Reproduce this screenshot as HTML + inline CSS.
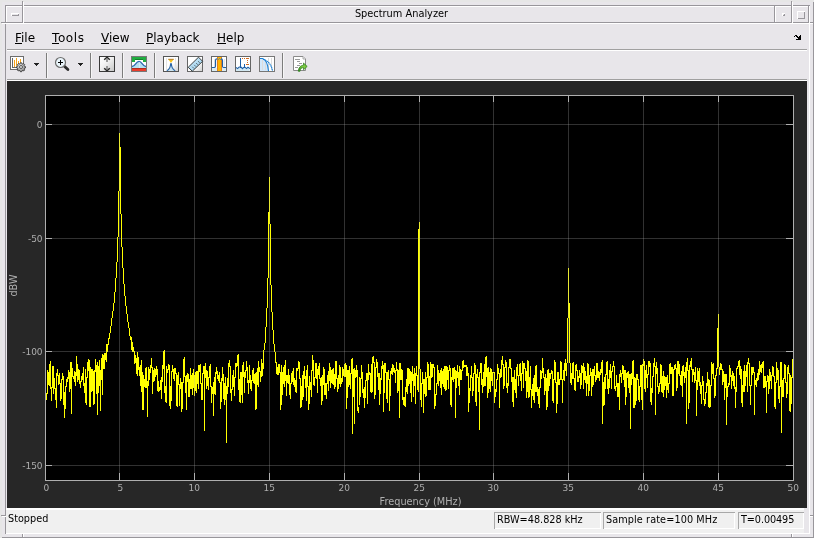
<!DOCTYPE html><html><head><meta charset="utf-8"><title>Spectrum Analyzer</title><style>
html,body{margin:0;padding:0}
body{width:814px;height:538px;overflow:hidden;background:#e8e6ea;position:relative;font-family:"DejaVu Sans","Liberation Sans",sans-serif;}
.r{position:absolute}
.t{position:absolute;will-change:transform;white-space:nowrap;line-height:1;color:#000}
svg{position:absolute;left:0;top:0}

</style></head><body>
<div class="r" style="left:0px;top:0px;width:814px;height:2px;background:#e6e6e6"></div>
<div class="r" style="left:0px;top:0px;width:2px;height:538px;background:#e6e6e6"></div>
<div class="r" style="left:813px;top:2px;width:1px;height:536px;background:#98969b"></div>
<div class="r" style="left:2px;top:537px;width:812px;height:1px;background:#98969b"></div>
<div class="r" style="left:5px;top:5px;width:805px;height:1px;background:#98969b"></div>
<div class="r" style="left:5px;top:5px;width:1px;height:529px;background:#98969b"></div>
<div class="r" style="left:809px;top:6px;width:1px;height:528px;background:#ffffff"></div>
<div class="r" style="left:6px;top:533px;width:804px;height:1px;background:#ffffff"></div>
<div class="r" style="left:6px;top:6px;width:16px;height:1px;background:#ffffff"></div>
<div class="r" style="left:6px;top:6px;width:1px;height:16px;background:#ffffff"></div>
<div class="r" style="left:22px;top:6px;width:1px;height:17px;background:#98969b"></div>
<div class="r" style="left:6px;top:22px;width:17px;height:1px;background:#98969b"></div>
<div class="r" style="left:23px;top:6px;width:751px;height:1px;background:#ffffff"></div>
<div class="r" style="left:23px;top:6px;width:1px;height:16px;background:#ffffff"></div>
<div class="r" style="left:774px;top:6px;width:1px;height:17px;background:#98969b"></div>
<div class="r" style="left:23px;top:22px;width:752px;height:1px;background:#98969b"></div>
<div class="r" style="left:775px;top:6px;width:16px;height:1px;background:#ffffff"></div>
<div class="r" style="left:775px;top:6px;width:1px;height:16px;background:#ffffff"></div>
<div class="r" style="left:791px;top:6px;width:1px;height:17px;background:#98969b"></div>
<div class="r" style="left:775px;top:22px;width:17px;height:1px;background:#98969b"></div>
<div class="r" style="left:792px;top:6px;width:16px;height:1px;background:#ffffff"></div>
<div class="r" style="left:792px;top:6px;width:1px;height:16px;background:#ffffff"></div>
<div class="r" style="left:808px;top:6px;width:1px;height:17px;background:#98969b"></div>
<div class="r" style="left:792px;top:22px;width:17px;height:1px;background:#98969b"></div>
<div class="r" style="left:6px;top:23px;width:803px;height:1px;background:#ffffff"></div>
<div class="r" style="left:22px;top:1px;width:1px;height:5px;background:#98969b"></div>
<div class="r" style="left:23px;top:2px;width:1px;height:4px;background:#ffffff"></div>
<div class="r" style="left:22px;top:534px;width:1px;height:3px;background:#98969b"></div>
<div class="r" style="left:23px;top:534px;width:1px;height:3px;background:#ffffff"></div>
<div class="r" style="left:791px;top:1px;width:1px;height:5px;background:#98969b"></div>
<div class="r" style="left:792px;top:2px;width:1px;height:4px;background:#ffffff"></div>
<div class="r" style="left:791px;top:534px;width:1px;height:3px;background:#98969b"></div>
<div class="r" style="left:792px;top:534px;width:1px;height:3px;background:#ffffff"></div>
<div class="r" style="left:1px;top:22px;width:5px;height:1px;background:#98969b"></div>
<div class="r" style="left:2px;top:23px;width:4px;height:1px;background:#ffffff"></div>
<div class="r" style="left:810px;top:22px;width:3px;height:1px;background:#98969b"></div>
<div class="r" style="left:810px;top:23px;width:3px;height:1px;background:#ffffff"></div>
<div class="r" style="left:1px;top:515px;width:5px;height:1px;background:#98969b"></div>
<div class="r" style="left:2px;top:516px;width:4px;height:1px;background:#ffffff"></div>
<div class="r" style="left:810px;top:515px;width:3px;height:1px;background:#98969b"></div>
<div class="r" style="left:810px;top:516px;width:3px;height:1px;background:#ffffff"></div>
<div class="r" style="left:23px;top:6px;width:1px;height:17px;background:#ffffff"></div>
<div class="r" style="left:792px;top:6px;width:1px;height:17px;background:#ffffff"></div>
<div class="r" style="left:11px;top:13px;width:8px;height:1px;background:#ffffff"></div>
<div class="r" style="left:11px;top:13px;width:1px;height:3px;background:#ffffff"></div>
<div class="r" style="left:12px;top:15px;width:7px;height:1px;background:#98969b"></div>
<div class="r" style="left:18px;top:14px;width:1px;height:2px;background:#98969b"></div>
<div class="r" style="left:782px;top:13px;width:3px;height:1px;background:#ffffff"></div>
<div class="r" style="left:782px;top:13px;width:1px;height:3px;background:#ffffff"></div>
<div class="r" style="left:783px;top:15px;width:2px;height:1px;background:#98969b"></div>
<div class="r" style="left:784px;top:14px;width:1px;height:2px;background:#98969b"></div>
<div class="r" style="left:797px;top:11px;width:8px;height:1px;background:#ffffff"></div>
<div class="r" style="left:797px;top:11px;width:1px;height:8px;background:#ffffff"></div>
<div class="r" style="left:798px;top:18px;width:7px;height:1px;background:#98969b"></div>
<div class="r" style="left:804px;top:12px;width:1px;height:7px;background:#98969b"></div>
<div class="t" style="left:25.5px;width:751px;top:9px;text-align:center;font-size:9.8px;">Spectrum Analyzer</div>
<div class="r" style="left:7px;top:49px;width:800px;height:1px;background:#a0a0a0"></div>
<div class="r" style="left:7px;top:50px;width:800px;height:1px;background:#ffffff"></div>
<div class="t" style="left:15px;top:32px;font-size:12px;">File</div>
<div class="r" style="left:15px;top:43px;width:7px;height:1px;background:#000"></div>
<div class="t" style="left:52px;top:32px;font-size:12px;letter-spacing:0.6px;">Tools</div>
<div class="r" style="left:52px;top:43px;width:7px;height:1px;background:#000"></div>
<div class="t" style="left:101px;top:32px;font-size:12px;">View</div>
<div class="r" style="left:101px;top:43px;width:8px;height:1px;background:#000"></div>
<div class="t" style="left:146px;top:32px;font-size:12px;">Playback</div>
<div class="r" style="left:146px;top:43px;width:8px;height:1px;background:#000"></div>
<div class="t" style="left:217px;top:32px;font-size:12px;">Help</div>
<div class="r" style="left:217px;top:43px;width:9px;height:1px;background:#000"></div>
<div class="r" style="left:795px;top:35px;width:1px;height:1px;background:#000"></div>
<div class="r" style="left:796px;top:35px;width:1px;height:1px;background:#000"></div>
<div class="r" style="left:800px;top:35px;width:1px;height:1px;background:#000"></div>
<div class="r" style="left:794px;top:36px;width:1px;height:1px;background:#000"></div>
<div class="r" style="left:796px;top:36px;width:1px;height:1px;background:#000"></div>
<div class="r" style="left:797px;top:36px;width:1px;height:1px;background:#000"></div>
<div class="r" style="left:799px;top:36px;width:1px;height:1px;background:#000"></div>
<div class="r" style="left:800px;top:36px;width:1px;height:1px;background:#000"></div>
<div class="r" style="left:797px;top:37px;width:1px;height:1px;background:#000"></div>
<div class="r" style="left:798px;top:37px;width:1px;height:1px;background:#000"></div>
<div class="r" style="left:799px;top:37px;width:1px;height:1px;background:#000"></div>
<div class="r" style="left:800px;top:37px;width:1px;height:1px;background:#000"></div>
<div class="r" style="left:798px;top:38px;width:1px;height:1px;background:#000"></div>
<div class="r" style="left:799px;top:38px;width:1px;height:1px;background:#000"></div>
<div class="r" style="left:800px;top:38px;width:1px;height:1px;background:#000"></div>
<div class="r" style="left:796px;top:39px;width:1px;height:1px;background:#000"></div>
<div class="r" style="left:797px;top:39px;width:1px;height:1px;background:#000"></div>
<div class="r" style="left:798px;top:39px;width:1px;height:1px;background:#000"></div>
<div class="r" style="left:799px;top:39px;width:1px;height:1px;background:#000"></div>
<div class="r" style="left:800px;top:39px;width:1px;height:1px;background:#000"></div>
<div class="r" style="left:7px;top:79px;width:800px;height:1px;background:#a0a0a0"></div>
<div class="r" style="left:7px;top:80px;width:800px;height:1px;background:#ffffff"></div>
<div class="r" style="left:46px;top:53px;width:1px;height:25px;background:#7c7c7c"></div>
<div class="r" style="left:47px;top:53px;width:1px;height:25px;background:#f6f6f6"></div>
<div class="r" style="left:90px;top:53px;width:1px;height:25px;background:#7c7c7c"></div>
<div class="r" style="left:91px;top:53px;width:1px;height:25px;background:#f6f6f6"></div>
<div class="r" style="left:122px;top:53px;width:1px;height:25px;background:#7c7c7c"></div>
<div class="r" style="left:123px;top:53px;width:1px;height:25px;background:#f6f6f6"></div>
<div class="r" style="left:154px;top:53px;width:1px;height:25px;background:#7c7c7c"></div>
<div class="r" style="left:155px;top:53px;width:1px;height:25px;background:#f6f6f6"></div>
<div class="r" style="left:282px;top:53px;width:1px;height:25px;background:#7c7c7c"></div>
<div class="r" style="left:283px;top:53px;width:1px;height:25px;background:#f6f6f6"></div>
<div class="r" style="left:7px;top:81px;width:800px;height:427px;background:#272727"></div>
<div class="r" style="left:46px;top:96px;width:747px;height:384px;background:#000"></div>
<div class="r" style="left:6px;top:508px;width:798px;height:25px;background:#f0f0f0"></div>
<div class="r" style="left:6px;top:508px;width:798px;height:2px;background:#ffffff"></div>
<div class="t" style="left:8px;top:514px;font-size:9.7px;">Stopped</div>
<div class="r" style="left:494px;top:512px;width:107px;height:1px;background:#a8a8a8"></div>
<div class="r" style="left:494px;top:512px;width:1px;height:17px;background:#a8a8a8"></div>
<div class="r" style="left:495px;top:528px;width:106px;height:1px;background:#ffffff"></div>
<div class="r" style="left:600px;top:513px;width:1px;height:16px;background:#ffffff"></div>
<div class="t" style="left:497px;top:515px;font-size:9.7px;letter-spacing:0px">RBW=48.828 kHz</div>
<div class="r" style="left:603px;top:512px;width:132px;height:1px;background:#a8a8a8"></div>
<div class="r" style="left:603px;top:512px;width:1px;height:17px;background:#a8a8a8"></div>
<div class="r" style="left:604px;top:528px;width:131px;height:1px;background:#ffffff"></div>
<div class="r" style="left:734px;top:513px;width:1px;height:16px;background:#ffffff"></div>
<div class="t" style="left:606px;top:515px;font-size:9.7px;letter-spacing:0.1px">Sample rate=100 MHz</div>
<div class="r" style="left:738px;top:512px;width:66px;height:1px;background:#a8a8a8"></div>
<div class="r" style="left:738px;top:512px;width:1px;height:17px;background:#a8a8a8"></div>
<div class="r" style="left:739px;top:528px;width:65px;height:1px;background:#ffffff"></div>
<div class="r" style="left:803px;top:513px;width:1px;height:16px;background:#ffffff"></div>
<div class="t" style="left:741px;top:515px;font-size:9.7px;letter-spacing:-0.1px">T=0.00495</div>
<svg width="814" height="538" viewBox="0 0 814 538" font-family="DejaVu Sans, Liberation Sans, sans-serif">
<g shape-rendering="crispEdges">
<rect x="119" y="96" width="1" height="6" fill="#afafaf"/>
<rect x="119" y="473" width="1" height="7" fill="#afafaf"/>
<rect x="194" y="96" width="1" height="6" fill="#afafaf"/>
<rect x="194" y="473" width="1" height="7" fill="#afafaf"/>
<rect x="269" y="96" width="1" height="6" fill="#afafaf"/>
<rect x="269" y="473" width="1" height="7" fill="#afafaf"/>
<rect x="344" y="96" width="1" height="6" fill="#afafaf"/>
<rect x="344" y="473" width="1" height="7" fill="#afafaf"/>
<rect x="419" y="96" width="1" height="6" fill="#afafaf"/>
<rect x="419" y="473" width="1" height="7" fill="#afafaf"/>
<rect x="493" y="96" width="1" height="6" fill="#afafaf"/>
<rect x="493" y="473" width="1" height="7" fill="#afafaf"/>
<rect x="568" y="96" width="1" height="6" fill="#afafaf"/>
<rect x="568" y="473" width="1" height="7" fill="#afafaf"/>
<rect x="643" y="96" width="1" height="6" fill="#afafaf"/>
<rect x="643" y="473" width="1" height="7" fill="#afafaf"/>
<rect x="718" y="96" width="1" height="6" fill="#afafaf"/>
<rect x="718" y="473" width="1" height="7" fill="#afafaf"/>
<rect x="46" y="124" width="6" height="1" fill="#afafaf"/>
<rect x="786" y="124" width="7" height="1" fill="#afafaf"/>
<rect x="46" y="238" width="6" height="1" fill="#afafaf"/>
<rect x="786" y="238" width="7" height="1" fill="#afafaf"/>
<rect x="46" y="351" width="6" height="1" fill="#afafaf"/>
<rect x="786" y="351" width="7" height="1" fill="#afafaf"/>
<rect x="46" y="465" width="6" height="1" fill="#afafaf"/>
<rect x="786" y="465" width="7" height="1" fill="#afafaf"/>
<rect x="45" y="95" width="749" height="1" fill="#afafaf"/>
<rect x="45" y="480" width="749" height="1" fill="#afafaf"/>
<rect x="45" y="95" width="1" height="386" fill="#afafaf"/>
<rect x="793" y="95" width="1" height="386" fill="#afafaf"/>
<path fill="none" stroke="#ffff00" stroke-width="1" d="M46.5 393V400M47.5 370V394M48.5 372V385M49.5 364V386M50.5 361V389M51.5 387V401M52.5 366V388M53.5 366V394M54.5 378V389M55.5 388V400M56.5 373V408M57.5 369V376M58.5 375V385M59.5 373V384M60.5 383V401M61.5 379V399M62.5 373V380M63.5 376V405M64.5 392V418M65.5 386V409M66.5 379V387M67.5 377V382M68.5 370V379M69.5 372V392M70.5 362V389M71.5 362V414M72.5 368V377M73.5 376V379M74.5 371V382M75.5 372V386M76.5 356V376M77.5 364V382M78.5 369V380M79.5 370V384M80.5 381V388M81.5 376V382M82.5 373V380M83.5 367V386M84.5 383V393M85.5 369V403M86.5 377V405M87.5 362V378M88.5 359V371M89.5 360V407M90.5 367V407M91.5 369V392M92.5 369V391M93.5 371V405M94.5 370V404M95.5 359V372M96.5 365V394M97.5 362V415M98.5 366V393M99.5 360V386M100.5 370V411M101.5 358V380M102.5 354V395M103.5 355V369M104.5 353V369M105.5 353V360M106.5 344V362M107.5 344V352M108.5 338V345M109.5 333V339M110.5 326V333M111.5 318V326M112.5 311V318M113.5 303V311M114.5 292V303M115.5 278V292M116.5 262V278M117.5 237V262M118.5 191V237M119.5 133V191M120.5 147V214M121.5 214V247M122.5 247V268M123.5 268V284M124.5 284V296M125.5 296V306M126.5 306V314M127.5 314V322M128.5 322V328M129.5 328V336M130.5 336V340M131.5 337V350M132.5 342V352M133.5 347V352M134.5 351V364M135.5 355V363M136.5 358V374M137.5 352V376M138.5 357V370M139.5 367V376M140.5 365V386M141.5 360V392M142.5 372V410M143.5 375V410M144.5 379V387M145.5 368V388M146.5 367V388M147.5 381V417M148.5 367V386M149.5 369V380M150.5 365V373M151.5 358V368M152.5 367V394M153.5 370V382M154.5 368V381M155.5 369V377M156.5 366V375M157.5 369V391M158.5 381V392M159.5 387V391M160.5 380V390M161.5 377V399M162.5 365V382M163.5 351V369M164.5 350V393M165.5 386V402M166.5 366V403M167.5 369V373M168.5 364V370M169.5 365V406M170.5 386V409M171.5 371V401M172.5 365V372M173.5 369V379M174.5 368V381M175.5 368V374M176.5 373V406M177.5 375V407M178.5 372V385M179.5 384V406M180.5 378V389M181.5 382V412M182.5 382V409M183.5 359V383M184.5 357V377M185.5 376V393M186.5 375V410M187.5 373V382M188.5 374V397M189.5 379V397M190.5 368V389M191.5 375V389M192.5 373V395M193.5 369V388M194.5 375V396M195.5 372V391M196.5 371V393M197.5 371V384M198.5 365V389M199.5 365V372M200.5 364V384M201.5 383V400M202.5 373V400M203.5 366V374M204.5 366V431M205.5 363V378M206.5 370V389M207.5 371V386M208.5 377V390M209.5 366V378M210.5 364V387M211.5 386V403M212.5 387V394M213.5 382V416M214.5 377V394M215.5 372V395M216.5 367V374M217.5 371V379M218.5 375V381M219.5 372V383M220.5 382V409M221.5 378V402M222.5 367V381M223.5 374V399M224.5 383V405M225.5 377V400M226.5 386V443M227.5 378V394M228.5 363V387M229.5 360V367M230.5 366V393M231.5 389V401M232.5 375V390M233.5 370V387M234.5 377V396M235.5 363V378M236.5 363V367M237.5 355V366M238.5 354V390M239.5 379V402M240.5 372V403M241.5 372V395M242.5 365V403M243.5 362V377M244.5 372V393M245.5 370V378M246.5 361V371M247.5 367V383M248.5 380V394M249.5 365V383M250.5 375V389M251.5 380V391M252.5 370V381M253.5 368V383M254.5 374V384M255.5 373V410M256.5 372V409M257.5 368V385M258.5 361V387M259.5 367V372M260.5 371V382M261.5 359V377M262.5 363V376M263.5 350V369M264.5 343V350M265.5 327V343M266.5 308V327M267.5 278V308M268.5 212V278M269.5 177V224M270.5 224V285M271.5 285V312M272.5 312V330M273.5 330V344M274.5 344V352M275.5 352V363M276.5 362V374M277.5 367V375M278.5 364V375M279.5 364V373M280.5 372V410M281.5 365V405M282.5 372V395M283.5 367V384M284.5 365V387M285.5 360V381M286.5 375V396M287.5 375V383M288.5 369V384M289.5 375V395M290.5 383V399M291.5 373V384M292.5 371V382M293.5 368V385M294.5 378V387M295.5 380V392M296.5 368V393M297.5 368V371M298.5 361V369M299.5 362V379M300.5 378V408M301.5 386V407M302.5 375V400M303.5 371V397M304.5 366V379M305.5 376V388M306.5 370V401M307.5 365V387M308.5 386V410M309.5 376V404M310.5 382V390M311.5 370V397M312.5 355V371M313.5 360V385M314.5 377V386M315.5 363V378M316.5 363V379M317.5 369V393M318.5 366V375M319.5 363V379M320.5 378V386M321.5 377V405M322.5 375V401M323.5 367V385M324.5 369V395M325.5 383V395M326.5 383V399M327.5 375V384M328.5 371V391M329.5 363V381M330.5 367V388M331.5 370V383M332.5 369V384M333.5 368V385M334.5 374V389M335.5 361V387M336.5 361V379M337.5 378V392M338.5 375V389M339.5 365V384M340.5 367V387M341.5 378V384M342.5 367V382M343.5 369V376M344.5 364V377M345.5 363V377M346.5 365V409M347.5 370V398M348.5 370V387M349.5 366V385M350.5 373V389M351.5 359V374M352.5 358V434M353.5 369V397M354.5 368V424M355.5 370V378M356.5 365V377M357.5 370V411M358.5 407V413M359.5 377V405M360.5 378V397M361.5 365V379M362.5 372V393M363.5 389V398M364.5 387V408M365.5 380V398M366.5 373V381M367.5 373V404M368.5 364V380M369.5 372V375M370.5 373V392M371.5 364V393M372.5 357V392M373.5 356V363M374.5 362V399M375.5 367V395M376.5 359V368M377.5 362V377M378.5 373V390M379.5 373V405M380.5 378V394M381.5 366V380M382.5 361V369M383.5 365V412M384.5 363V393M385.5 363V373M386.5 372V399M387.5 372V403M388.5 370V380M389.5 379V411M390.5 371V396M391.5 368V374M392.5 364V375M393.5 365V372M394.5 368V373M395.5 370V383M396.5 362V371M397.5 369V393M398.5 370V391M399.5 363V418M400.5 363V380M401.5 369V380M402.5 370V400M403.5 397V405M404.5 397V406M405.5 387V407M406.5 379V392M407.5 368V394M408.5 368V386M409.5 369V384M410.5 371V393M411.5 372V402M412.5 366V381M413.5 374V397M414.5 368V386M415.5 373V404M416.5 366V376M417.5 375V390M418.5 229V392M419.5 222V369M420.5 369V400M421.5 383V407M422.5 372V384M423.5 379V413M424.5 379V394M425.5 372V397M426.5 377V396M427.5 362V378M428.5 364V390M429.5 376V390M430.5 362V390M431.5 364V378M432.5 364V377M433.5 364V368M434.5 367V409M435.5 394V406M436.5 383V395M437.5 365V384M438.5 370V386M439.5 373V381M440.5 370V388M441.5 368V395M442.5 371V384M443.5 369V387M444.5 366V389M445.5 366V391M446.5 366V390M447.5 367V380M448.5 370V389M449.5 365V371M450.5 368V405M451.5 377V407M452.5 368V380M453.5 368V382M454.5 367V379M455.5 370V418M456.5 371V388M457.5 365V378M458.5 372V386M459.5 366V395M460.5 369V380M461.5 370V380M462.5 361V371M463.5 360V368M464.5 365V367M465.5 365V367M466.5 365V376M467.5 367V376M468.5 373V412M469.5 388V403M470.5 375V391M471.5 366V378M472.5 377V396M473.5 373V391M474.5 363V374M475.5 365V402M476.5 374V406M477.5 369V378M478.5 377V392M479.5 372V430M480.5 363V373M481.5 363V385M482.5 379V393M483.5 372V387M484.5 364V386M485.5 357V386M486.5 356V377M487.5 368V398M488.5 367V393M489.5 372V389M490.5 368V392M491.5 369V381M492.5 372V386M493.5 372V373M494.5 372V403M495.5 389V397M496.5 379V392M497.5 364V380M498.5 368V374M499.5 373V408M500.5 369V378M501.5 360V377M502.5 356V365M503.5 364V389M504.5 367V386M505.5 360V368M506.5 362V388M507.5 383V393M508.5 367V386M509.5 359V368M510.5 359V369M511.5 368V382M512.5 377V402M513.5 377V407M514.5 370V390M515.5 379V393M516.5 367V398M517.5 364V376M518.5 375V386M519.5 364V376M520.5 363V381M521.5 373V391M522.5 361V374M523.5 363V388M524.5 363V369M525.5 368V381M526.5 371V398M527.5 360V392M528.5 361V398M529.5 377V397M530.5 366V390M531.5 389V408M532.5 384V396M533.5 378V400M534.5 375V403M535.5 366V392M536.5 365V392M537.5 387V396M538.5 389V404M539.5 387V408M540.5 370V388M541.5 371V379M542.5 358V373M543.5 368V378M544.5 377V395M545.5 374V391M546.5 378V410M547.5 370V407M548.5 369V391M549.5 373V386M550.5 373V379M551.5 370V374M552.5 371V401M553.5 379V403M554.5 360V380M555.5 362V383M556.5 382V413M557.5 372V404M558.5 372V385M559.5 379V385M560.5 361V380M561.5 362V380M562.5 379V403M563.5 370V380M564.5 363V381M565.5 359V371M566.5 363V376M567.5 318V363M568.5 268V318M569.5 303V363M570.5 363V383M571.5 373V385M572.5 363V379M573.5 362V379M574.5 378V390M575.5 365V391M576.5 364V371M577.5 370V382M578.5 376V382M579.5 370V378M580.5 373V389M581.5 365V385M582.5 366V373M583.5 363V389M584.5 367V380M585.5 371V383M586.5 376V396M587.5 363V384M588.5 364V396M589.5 375V391M590.5 368V376M591.5 372V396M592.5 369V387M593.5 369V385M594.5 366V376M595.5 375V382M596.5 363V380M597.5 363V378M598.5 371V378M599.5 372V381M600.5 369V375M601.5 362V373M602.5 360V424M603.5 382V406M604.5 377V405M605.5 374V389M606.5 362V375M607.5 361V389M608.5 379V394M609.5 370V388M610.5 364V378M611.5 371V389M612.5 366V372M613.5 361V367M614.5 366V389M615.5 386V391M616.5 375V387M617.5 383V397M618.5 383V397M619.5 374V410M620.5 370V377M621.5 373V383M622.5 365V374M623.5 366V380M624.5 370V387M625.5 370V405M626.5 373V397M627.5 372V378M628.5 371V388M629.5 374V393M630.5 374V429M631.5 373V385M632.5 361V379M633.5 360V408M634.5 377V408M635.5 378V405M636.5 374V401M637.5 374V380M638.5 379V400M639.5 386V402M640.5 365V387M641.5 365V400M642.5 364V410M643.5 359V366M644.5 361V389M645.5 370V392M646.5 365V378M647.5 374V388M648.5 361V375M649.5 361V367M650.5 363V402M651.5 388V405M652.5 376V393M653.5 363V377M654.5 358V367M655.5 366V415M656.5 362V374M657.5 368V387M658.5 386V394M659.5 383V392M660.5 364V384M661.5 365V392M662.5 376V393M663.5 371V397M664.5 376V390M665.5 377V386M666.5 377V398M667.5 375V390M668.5 383V393M669.5 364V384M670.5 363V374M671.5 367V374M672.5 367V396M673.5 369V396M674.5 365V370M675.5 364V369M676.5 368V391M677.5 361V388M678.5 361V374M679.5 364V376M680.5 375V385M681.5 371V386M682.5 366V397M683.5 365V376M684.5 372V383M685.5 367V378M686.5 362V424M687.5 358V371M688.5 370V409M689.5 365V403M690.5 361V367M691.5 358V370M692.5 369V382M693.5 369V375M694.5 372V383M695.5 367V381M696.5 380V416M697.5 368V390M698.5 371V382M699.5 368V386M700.5 382V394M701.5 385V404M702.5 376V386M703.5 381V400M704.5 399V406M705.5 392V404M706.5 383V393M707.5 372V386M708.5 379V407M709.5 380V408M710.5 385V407M711.5 362V386M712.5 364V374M713.5 363V379M714.5 378V398M715.5 375V396M716.5 368V376M717.5 328V369M718.5 314V367M719.5 367V375M720.5 363V370M721.5 364V370M722.5 369V385M723.5 371V382M724.5 374V400M725.5 374V388M726.5 374V425M727.5 386V397M728.5 383V387M729.5 365V385M730.5 368V377M731.5 375V389M732.5 371V381M733.5 373V386M734.5 376V389M735.5 387V408M736.5 368V392M737.5 366V369M738.5 361V367M739.5 360V375M740.5 366V379M741.5 369V403M742.5 385V407M743.5 371V392M744.5 365V392M745.5 371V386M746.5 365V377M747.5 362V392M748.5 358V364M749.5 363V386M750.5 385V405M751.5 367V386M752.5 367V375M753.5 367V373M754.5 372V415M755.5 380V385M756.5 378V387M757.5 373V381M758.5 369V380M759.5 361V375M760.5 365V372M761.5 364V373M762.5 362V368M763.5 361V388M764.5 376V388M765.5 376V387M766.5 381V413M767.5 375V382M768.5 376V394M769.5 369V389M770.5 372V381M771.5 375V389M772.5 366V376M773.5 367V377M774.5 376V407M775.5 382V409M776.5 362V383M777.5 368V380M778.5 370V399M779.5 386V403M780.5 362V387M781.5 362V433M782.5 380V397M783.5 378V397M784.5 364V379M785.5 365V383M786.5 382V398M787.5 367V394M788.5 365V374M789.5 373V411M790.5 375V412M791.5 377V404M792.5 359V378"/>
<rect x="119" y="96" width="1" height="384" fill="rgba(175,175,175,0.28)"/>
<rect x="194" y="96" width="1" height="384" fill="rgba(175,175,175,0.28)"/>
<rect x="269" y="96" width="1" height="384" fill="rgba(175,175,175,0.28)"/>
<rect x="344" y="96" width="1" height="384" fill="rgba(175,175,175,0.28)"/>
<rect x="419" y="96" width="1" height="384" fill="rgba(175,175,175,0.28)"/>
<rect x="493" y="96" width="1" height="384" fill="rgba(175,175,175,0.28)"/>
<rect x="568" y="96" width="1" height="384" fill="rgba(175,175,175,0.28)"/>
<rect x="643" y="96" width="1" height="384" fill="rgba(175,175,175,0.28)"/>
<rect x="718" y="96" width="1" height="384" fill="rgba(175,175,175,0.28)"/>
<rect x="46" y="124" width="747" height="1" fill="rgba(175,175,175,0.28)"/>
<rect x="46" y="238" width="747" height="1" fill="rgba(175,175,175,0.28)"/>
<rect x="46" y="351" width="747" height="1" fill="rgba(175,175,175,0.28)"/>
<rect x="46" y="465" width="747" height="1" fill="rgba(175,175,175,0.28)"/>
</g>
<g fill="#afafaf" font-size="9px">
<text x="46.3" y="491" text-anchor="middle">0</text>
<text x="120.3" y="491" text-anchor="middle">5</text>
<text x="194.2" y="491" text-anchor="middle">10</text>
<text x="269.2" y="491" text-anchor="middle">15</text>
<text x="344.2" y="491" text-anchor="middle">20</text>
<text x="419.2" y="491" text-anchor="middle">25</text>
<text x="493.2" y="491" text-anchor="middle">30</text>
<text x="568.2" y="491" text-anchor="middle">35</text>
<text x="643.2" y="491" text-anchor="middle">40</text>
<text x="718.2" y="491" text-anchor="middle">45</text>
<text x="793.2" y="491" text-anchor="middle">50</text>
<text x="42.6" y="127.5" text-anchor="end">0</text>
<text x="42.6" y="241.5" text-anchor="end">-50</text>
<text x="42.6" y="354.5" text-anchor="end">-100</text>
<text x="42.6" y="468.5" text-anchor="end">-150</text>
<text x="420.5" y="505" text-anchor="middle" font-size="9.75px">Frequency (MHz)</text>
<text transform="translate(17,285.5) rotate(-90)" text-anchor="middle" font-size="9.75px">dBW</text>
</g>
<defs>
<linearGradient id="gw" x1="0" y1="0" x2="1" y2="1"><stop offset="0" stop-color="#ffffff"/><stop offset="0.55" stop-color="#ffffff"/><stop offset="1" stop-color="#cfcfcf"/></linearGradient>
<linearGradient id="gb" x1="0" y1="0" x2="1" y2="1"><stop offset="0" stop-color="#d8eefa"/><stop offset="1" stop-color="#8fcbec"/></linearGradient>
<radialGradient id="gg" cx="0.4" cy="0.35" r="0.7"><stop offset="0" stop-color="#e0e0e0"/><stop offset="1" stop-color="#8c8c8c"/></radialGradient>
<linearGradient id="ggr" x1="0" y1="1" x2="1" y2="0"><stop offset="0" stop-color="#2c8a1c"/><stop offset="0.6" stop-color="#86cf45"/><stop offset="1" stop-color="#4aa82a"/></linearGradient>
<linearGradient id="gw2" x1="0" y1="0" x2="1" y2="1"><stop offset="0" stop-color="#ffffff"/><stop offset="0.4" stop-color="#f4f4f4"/><stop offset="1" stop-color="#c4c4c4"/></linearGradient>
</defs>
<!-- icon1: scope config -->
<g shape-rendering="crispEdges">
<rect x="10.5" y="56.5" width="13" height="13" fill="#fff" stroke="#6c6c6c"/>
<rect x="12" y="58" width="1" height="10" fill="#666"/><rect x="12" y="67" width="6" height="1" fill="#666"/>
<rect x="14" y="60" width="1" height="7" fill="#f5a31a"/><rect x="16" y="58" width="1" height="8" fill="#f5a31a"/>
<rect x="18" y="61" width="1" height="3" fill="#f5a31a"/><rect x="20" y="59" width="1" height="4" fill="#f5a31a"/>
</g>
<g transform="translate(21 67) scale(0.87) translate(-21 -67)">
<path id="gear" fill="url(#gg)" stroke="#3c3c3c" stroke-width="1.1" d="M20.2 62.2h1.6l.3 1.1 1 .4 1-.6 1.1 1.1-.6 1 .4 1 1.1.3v1.6l-1.1.3-.4 1 .6 1-1.1 1.1-1-.6-1 .4-.3 1.1h-1.6l-.3-1.1-1-.4-1 .6-1.100-1.100.6-1-.4-1-1.100-.3v-1.600l1.100-.3.4-1-.6-1 1.100-1.100 1 .6 1-.4z"/>
<circle cx="21" cy="67" r="1.7" fill="#f6f6f6" stroke="#4a4a4a" stroke-width="1.1"/>
</g>
<!-- dropdown arrows -->
<g shape-rendering="crispEdges" fill="#222">
<rect x="34" y="63" width="5" height="1"/><rect x="35" y="64" width="3" height="1"/><rect x="36" y="65" width="1" height="1"/>
<rect x="78" y="63" width="5" height="1"/><rect x="79" y="64" width="3" height="1"/><rect x="80" y="65" width="1" height="1"/>
</g>
<!-- icon2: zoom -->
<g>
<line x1="64.6" y1="66.4" x2="67.9" y2="69.6" stroke="#2b2b2b" stroke-width="2.8" stroke-linecap="round"/>
<circle cx="60.5" cy="62.5" r="5" fill="#eaf5fb" stroke="#6e6e6e" stroke-width="1.2"/>
<g shape-rendering="crispEdges" fill="#000"><rect x="58" y="62" width="5" height="1"/><rect x="60" y="60" width="1" height="5"/></g>
</g>
<!-- icon3: autoscale -->
<g>
<rect x="99.5" y="56.500" width="15" height="15" fill="url(#gw2)" stroke="#3a3a3a" shape-rendering="crispEdges"/>
<path d="M104.200 59.800L107 57.200L109.800 59.800" fill="none" stroke="#2a2a2a" stroke-width="1.4"/>
<rect x="106.3" y="58.800" width="1.4" height="3.200" fill="#777"/>
<path d="M104.200 68.200L107 70.800L109.800 68.200" fill="none" stroke="#2a2a2a" stroke-width="1.4"/>
<rect x="106.3" y="66" width="1.4" height="3.200" fill="#777"/>
</g>
<!-- icon4: spectral mask -->
<g>
<g shape-rendering="crispEdges">
<rect x="131.500" y="56.500" width="15" height="15" fill="#fff" stroke="#777"/>
<rect x="132" y="57" width="14" height="3" fill="#21ad41"/>
<rect x="132" y="60" width="3" height="2" fill="#21ad41"/><rect x="143" y="60" width="3" height="2" fill="#21ad41"/>
<rect x="135" y="59" width="8" height="1" fill="#13812b"/>
<rect x="132" y="68" width="14" height="3" fill="#e93c2c"/><rect x="132" y="68" width="14" height="1" fill="#b32a1c"/>
<rect x="132" y="66" width="14" height="2" fill="#a6d9ee"/>
</g>
<path d="M132 66.500C135.500 66.500 135.800 61.300 139 61.300S142.500 66.500 146 66.500L146 68 132 68z" fill="#b5dff0"/>
<path d="M132 66.500C135.500 66.500 135.800 61.300 139 61.300S142.500 66.500 146 66.500" fill="none" stroke="#2b68b0" stroke-width="1.3"/>
<rect x="139" y="62" width="0.600" height="6" fill="#e6f3fa"/>
</g>
<!-- icon5: peak finder -->
<g>
<rect x="163.500" y="56.500" width="15" height="15" fill="url(#gw)" stroke="#555" shape-rendering="crispEdges"/>
<rect x="166" y="58" width="1" height="12" fill="#e4e4e4"/><rect x="175" y="58" width="1" height="12" fill="#e4e4e4"/>
<path d="M171 63C170.600 68 169.500 69.500 166.800 70.800H175.200C172.500 69.500 171.400 68 171 63z" fill="#c4e2f1"/>
<path d="M166.800 70.800C169.500 69.500 170.500 68 170.700 63.300M171.300 63.300C171.500 68 172.500 69.500 175.200 70.800" fill="none" stroke="#2a66a8" stroke-width="1.200"/>
<path d="M168.300 59.200H173.700L171 63z" fill="#f6c21a"/>
<path d="M168.200 59.300H173.800" stroke="#b0701c" stroke-width="0.9"/>
</g>
<!-- icon6: ruler -->
<g>
<rect x="187.500" y="56.500" width="15" height="15" fill="url(#gw)" stroke="#666" shape-rendering="crispEdges"/>
<path d="M198.500 57.200L202.600 61.300L192.300 71.200L188.200 67.300z" fill="url(#gb)" stroke="#2a2a2a" stroke-width="0.9"/>
<path d="M199.500 62.600l-1.500 -1.500M197.600 64.500l-1.500 -1.500M195.700 66.400l-1.500 -1.500M193.800 68.300l-1.500 -1.500" stroke="#1e1e1e" stroke-width="0.9" stroke-dasharray="0.800 0.500"/>
</g>
<!-- icon7: channel measurements -->
<g>
<g shape-rendering="crispEdges">
<rect x="211.500" y="56.500" width="15" height="15" fill="#fff" stroke="#666"/>
<rect x="212" y="68" width="14" height="3" fill="#d9edf6"/>
<rect x="217" y="57" width="5" height="14" fill="#ffb400"/>
<rect x="217" y="57" width="1" height="14" fill="#e2801c"/><rect x="221" y="57" width="1" height="14" fill="#e2801c"/>
<rect x="214" y="59" width="1" height="11" fill="#e6e6e6"/><rect x="224" y="59" width="1" height="11" fill="#e6e6e6"/>
</g>
<path d="M212 67.500H214.500C215.500 67.500 215.500 67 215.500 66V60.500C215.500 59.300 216 58.800 217 58.800" fill="none" stroke="#1f5fa8" stroke-width="1.200"/>
<path d="M226 67.500H223.500C222.500 67.500 222.500 67 222.500 66V60.500C222.500 59.300 222 58.800 221 58.800" fill="none" stroke="#1f5fa8" stroke-width="1.200"/>
<path d="M217.500 58.500l1 1 1-1 1 1 1-1" fill="none" stroke="#2a78c8" stroke-width="0.9"/>
</g>
<!-- icon8: distortion -->
<g>
<rect x="235.500" y="56.500" width="15" height="15" fill="#fff" stroke="#666" shape-rendering="crispEdges"/>
<path d="M236 67.500l1.500 1.300 1.500-1.300H240V58.500h1V67.500l1.500 1.300 1.500-1.300V64.500h1V67.500l1.500 1.300 1.500-1.300 1.500 1.300V71H236z" fill="#d2e8f2"/>
<path d="M236 67.300l1.500 1.300 1.700-1.600h.8M241 67l1.500 1.600 1.500-1.400M245 67.200l1.500 1.400 1.500-1.400 2 1.400" fill="none" stroke="#1f5fa8" stroke-width="1.100"/>
<g shape-rendering="crispEdges">
<rect x="240" y="58" width="1" height="10" fill="#1f5fa8"/><rect x="244" y="64" width="1" height="4" fill="#1f5fa8"/>
<g fill="#d2691e"><rect x="242" y="58" width="1" height="1"/><rect x="244" y="58" width="1" height="1"/><rect x="246" y="58" width="3" height="1"/>
<rect x="247" y="60" width="1" height="1"/><rect x="247" y="62" width="1" height="1"/><rect x="246" y="64" width="3" height="1"/></g>
</g>
</g>
<!-- icon9: ccdf -->
<g>
<rect x="259.500" y="56.500" width="15" height="15" fill="#fff" stroke="#777" shape-rendering="crispEdges"/>
<path d="M260 58.500H262.500C265.500 59.500 267.800 63 268.500 71H260z" fill="#d4e8fb"/>
<g shape-rendering="crispEdges" fill="#dcdcdc"><rect x="262" y="60" width="1" height="10"/><rect x="265" y="60" width="1" height="10"/><rect x="268" y="58" width="1" height="12"/><rect x="271" y="58" width="1" height="12"/></g>
<path d="M260 58.500H262.500C265.500 59.500 267.800 63 268.500 71" fill="none" stroke="#1a7fd4" stroke-width="1.100"/>
<path d="M263 59.200C267.500 60.500 271.500 64 272.500 71" fill="none" stroke="#1a7fd4" stroke-width="1.100" stroke-dasharray="1.600 0.400"/>
</g>
<!-- icon10: generate script -->
<g>
<path d="M293.500 56.500H303L305.500 59V70.500H293.500z" fill="#fff" stroke="#8a8a8a"/>
<path d="M303 56.500V59H305.500" fill="#eee" stroke="#9a9a9a" stroke-width="0.800"/>
<g shape-rendering="crispEdges" fill="#9a9a9a"><rect x="295" y="59" width="5" height="1"/><rect x="297" y="61" width="3" height="1"/><rect x="299" y="63" width="3" height="1"/><rect x="297" y="65" width="3" height="1"/><rect x="295" y="67" width="3" height="1"/></g>
<path d="M298.300 71.300C298.500 67.500 300.500 65.300 303.500 65.200V63L307.200 66.400L303.500 69.800V67.600C301.500 67.600 300.300 68.800 300 71.300z" fill="url(#ggr)" stroke="#2a7d1a" stroke-width="0.700"/>
</g>

</svg>
</body></html>
